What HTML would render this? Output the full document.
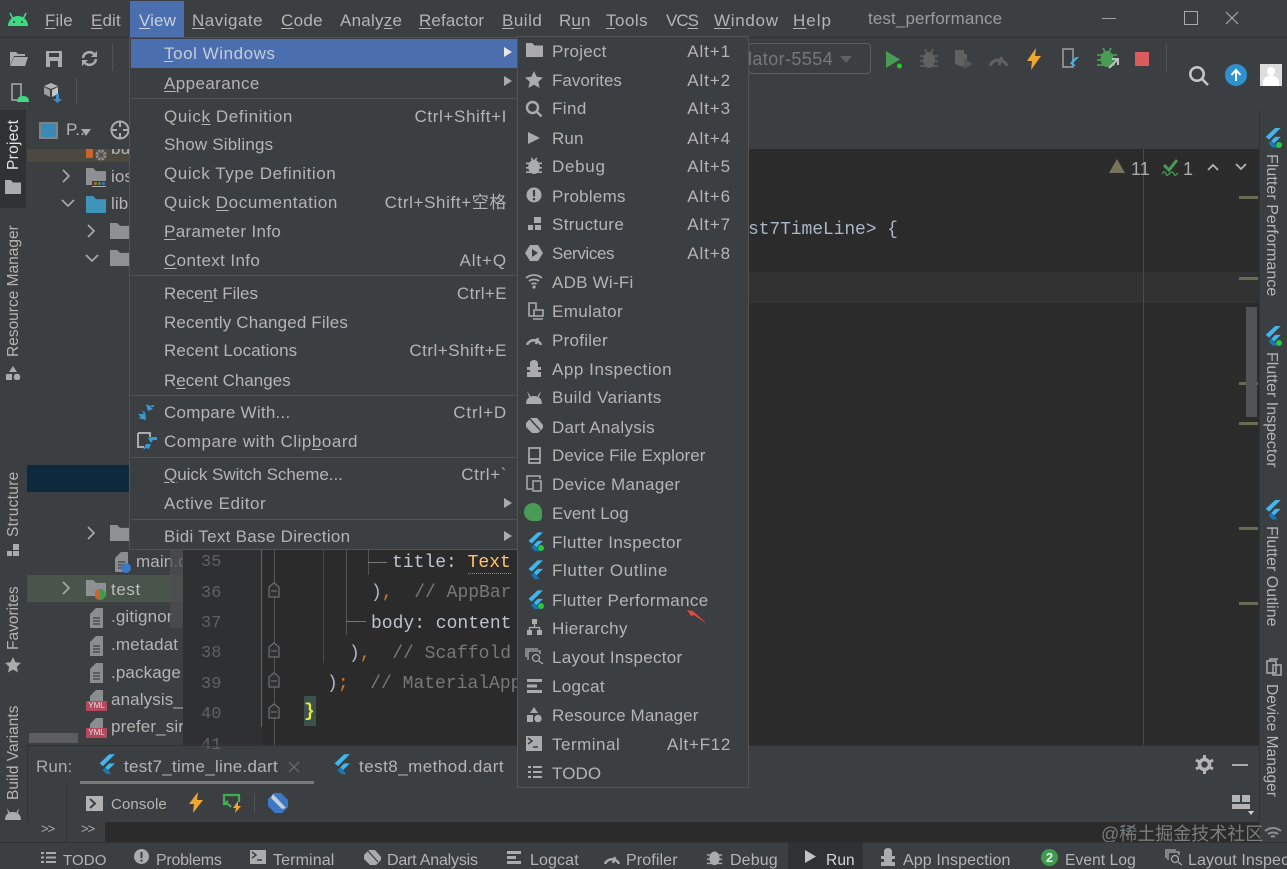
<!DOCTYPE html>
<html><head><meta charset="utf-8"><title>test_performance</title>
<style>
html,body{margin:0;padding:0;background:#3c3f41}
#r{position:relative;width:1287px;height:869px;overflow:hidden;background:#3c3f41;font-family:"Liberation Sans","Noto Sans CJK SC",sans-serif;color:#b4b4b4;font-size:17px}
.a,.t,.s,svg.i{position:absolute}
.t{line-height:24px;white-space:nowrap;letter-spacing:.12px;margin-top:1px}
.k{letter-spacing:.62px}
.b{margin-top:2px}
.m{font-family:"Liberation Mono","DejaVu Sans Mono",monospace;font-size:18px;line-height:24px;position:absolute;white-space:pre;color:#a9b7c6;margin-top:2px}
.n{color:#5f6162;font-family:"Liberation Mono",monospace;font-size:17px;position:absolute;left:201px;line-height:24px;margin-top:2px}
.v{position:absolute;writing-mode:vertical-rl;white-space:nowrap;font-size:15.500px;line-height:20px;color:#b4b4b4}
.r{font-size:16px}
.l{transform:rotate(180deg)}
.sep{position:absolute;height:1px;background:#515355}
.f{fill:#a9abac}
.o{color:#cc7832}
u{text-underline-offset:2px}
</style></head><body><div id="r">
<svg width="0" height="0" style="position:absolute"><defs>
<symbol id="fl" viewBox="2 1 15 18"><path fill="#3fb6ee" d="M11 1h5L5.500 11.500 2.500 9z"/><path fill="#3fb6ee" d="M11 9h5l-6 6-2.500-2.500z"/><path fill="#1a77b5" d="M7.500 12.500 10 15l3 3.500H8.500L5 15z"/></symbol>
<symbol id="fo" viewBox="1 3 14 11" preserveAspectRatio="none"><path d="M1 3h5l2 2h7v9H1z"/></symbol>
<symbol id="doc" viewBox="0 0 18 22"><path fill="#8b8e90" d="M2 7l6-6h7v20H2z"/><path stroke="#3c3f41" stroke-width="1.300" d="M5 11h7M5 14h7M5 17h7"/></symbol>
</defs></svg>

<!-- title bar -->
<div class="a" style="left:0;top:37px;width:1287px;height:1px;background:#2f3133"></div>
<svg class="i" style="left:7px;top:10px" width="22" height="18" viewBox="0 0 22 18"><path fill="#3ddc84" d="M1 16c0-5 4-10 10-10s10 5 10 10z"/><path stroke="#3ddc84" stroke-width="1.500" d="M6 9 3 3M16 9l3-6"/><circle cx="7" cy="12" r="1" fill="#3c3f41"/><circle cx="15" cy="12" r="1" fill="#3c3f41"/></svg>
<div class="t" style="left:45px;top:8px"><u>F</u>ile</div>
<div class="t" style="left:91px;top:8px"><u>E</u>dit</div>
<div class="a" style="left:130px;top:1px;width:54px;height:37px;background:#4b6eaf"></div>
<div class="t" style="left:139px;top:8px;color:#c9d1dc"><u>V</u>iew</div>
<div class="t" style="left:192px;top:8px;letter-spacing:.5px"><u>N</u>avigate</div>
<div class="t" style="left:281px;top:8px;letter-spacing:.3px"><u>C</u>ode</div>
<div class="t" style="left:340px;top:8px;letter-spacing:.25px">Analy<u>z</u>e</div>
<div class="t" style="left:419px;top:8px"><u>R</u>efactor</div>
<div class="t" style="left:502px;top:8px;letter-spacing:.5px"><u>B</u>uild</div>
<div class="t" style="left:559px;top:8px"><span>R<u>u</u>n</span></div>
<div class="t" style="left:606px;top:8px;letter-spacing:.5px"><u>T</u>ools</div>
<div class="t" style="left:666px;top:8px;letter-spacing:-1px">VC<u>S</u></div>
<div class="t" style="left:714px;top:8px;letter-spacing:.7px"><u>W</u>indow</div>
<div class="t" style="left:793px;top:8px;letter-spacing:1px"><u>H</u>elp</div>
<div class="t" style="left:868px;top:6px;color:#9a9c9d">test_performance</div>
<div class="a" style="left:1102px;top:18px;width:14px;height:1px;background:#a0a2a3"></div>
<div class="a" style="left:1184px;top:11px;width:12px;height:12px;border:1px solid #a8aaab"></div>
<svg class="i" style="left:1225px;top:11px" width="14" height="14"><path d="M1 1l12 12M13 1 1 13" stroke="#a8aaab" stroke-width="1.200"/></svg>

<!-- toolbar -->
<svg class="i" style="left:9px;top:50px" width="20" height="17" viewBox="0 0 20 17"><path fill="#a9abac" d="M1 2h6l2 2h7v2H5L1 15z"/><path fill="#a9abac" d="M5 7h14l-3 9H1z"/></svg>
<svg class="i" style="left:45px;top:50px" width="18" height="17" viewBox="0 0 18 17"><path fill="#a9abac" d="M1 1h16v16H1z"/><path fill="#3c3f41" d="M4 3h10v4H4zM5 11h8v6H5z"/></svg>
<svg class="i" style="left:80px;top:50px" width="19" height="17" viewBox="0 0 19 17" fill="none" stroke="#a9abac" stroke-width="2.500"><path d="M3 8a6.500 6.500 0 0 1 11-4M16 9a6.500 6.500 0 0 1-11 4"/><path fill="#a9abac" stroke="none" d="M17 1v6h-6zM2 16v-6h6z"/></svg>
<div class="a" style="left:112px;top:44px;width:1px;height:27px;background:#515355"></div>
<svg class="i" style="left:10px;top:83px" width="20" height="20" viewBox="0 0 20 20"><path fill="none" stroke="#a9abac" stroke-width="1.500" d="M2 1h9v16H2z"/><path fill="#3ddc84" d="M7 19c0-4 2-6 6-6s6 2 6 6z"/></svg>
<svg class="i" style="left:43px;top:82px" width="22" height="22" viewBox="0 0 22 22"><path fill="#b0b2b3" d="M8 1l7 3-7 3-7-3z"/><path fill="#9a9c9d" d="M1 5l6 3v7l-6-3z"/><path fill="#c3c5c6" d="M9 8l6-3v7l-6 3z"/><path fill="#3c8fcf" d="M13 12h3v5h3l-4.500 4L10 17h3z"/></svg>
<div class="a" style="left:76px;top:78px;width:1px;height:26px;background:#515355"></div>

<div class="a" style="left:748px;top:43px;width:121px;height:29px;border:1px solid #5e6060;border-radius:4px"></div>
<div class="t" style="left:748px;top:46px;color:#757778;font-size:18px;letter-spacing:.4px">lator-5554</div>
<div class="a" style="left:840px;top:56px;border:6px solid transparent;border-top:7px solid #5f6162;border-bottom:0"></div>
<svg class="i" style="left:885px;top:50px" width="20" height="20"><path fill="#499c54" d="M1 1l14 8.500L1 18z"/><circle cx="14.500" cy="16" r="2.500" fill="#1fcf1f"/></svg>
<svg class="i" style="left:920px;top:49px" width="18" height="20" viewBox="0 0 18 20"><ellipse cx="9" cy="11" rx="6" ry="8" fill="#5f6162"/><path stroke="#5f6162" stroke-width="1.600" d="M0 7h18M0 12h18M0 17h18M5 0l2 4M13 0l-2 4"/></svg>
<svg class="i" style="left:953px;top:49px" width="21" height="21"><path fill="#5f6162" d="M2 1h9v4h3v5l-4 8-8-3z"/><path fill="#545657" d="M11 9l9 6-9 5z"/></svg>
<svg class="i" style="left:988px;top:52px" width="21" height="14" fill="none" stroke="#5f6162" stroke-width="3"><path d="M2 14a9 9 0 0 1 17 0M11 13l3-8"/></svg>
<svg class="i" style="left:1027px;top:48px" width="15" height="22"><path fill="#f0a732" d="M9 0 0 13h5l-1 9 10-14H8z"/></svg>
<svg class="i" style="left:1061px;top:48px" width="20" height="22"><path fill="none" stroke="#a0a2a3" stroke-width="1.500" d="M2 1h10v18H2z"/><path fill="#3fb6ee" d="M15 9h3l-6 6 1 1 2 2h-3l-3-3z"/></svg>
<svg class="i" style="left:1097px;top:48px" width="24" height="22" viewBox="0 0 24 22"><ellipse cx="10" cy="11" rx="6.500" ry="8" fill="#499c54"/><path stroke="#499c54" stroke-width="1.800" d="M0 7h20M0 12h20M0 17h18M6 0l2 4M14 0l-2 4"/><path stroke="#c0c2c3" stroke-width="2" fill="none" d="M12 20l8-8M15 11h6v6"/></svg>
<div class="a" style="left:1135px;top:52px;width:14px;height:14px;background:#db5c5c"></div>
<div class="a" style="left:1166px;top:44px;width:1px;height:28px;background:#515355"></div>
<svg class="i" style="left:1188px;top:65px" width="22" height="22" fill="none" stroke="#c3c5c6" stroke-width="2.600"><circle cx="9" cy="9" r="6.700"/><path d="m14 14 6 6"/></svg>
<svg class="i" style="left:1224px;top:63px" width="24" height="24"><circle cx="12" cy="12" r="11" fill="#2f92d0"/><path d="M12 18V8M7.500 12 12 7l4.500 5" stroke="#fff" stroke-width="2" fill="none"/></svg>
<div class="a" style="left:1260px;top:64px;width:22px;height:22px;background:#dcdcdc;overflow:hidden"><div class="a" style="left:7px;top:3px;width:8px;height:9px;border-radius:50%;background:#fff"></div><div class="a" style="left:3px;top:12px;width:16px;height:12px;border-radius:6px 6px 0 0;background:#fff"></div></div>
<div class="a" style="left:0;top:110px;width:1287px;height:1px;background:#323232"></div>

<!-- left strip -->
<div class="a" style="left:0;top:110px;width:27px;height:732px;background:#3c3f41;border-right:1px solid #333"></div>
<div class="a" style="left:0;top:110px;width:26px;height:98px;background:#2f3133"></div>
<div class="v l" style="left:4px;top:123px;color:#e4e4e4;height:47px;letter-spacing:.3px">Project</div>
<svg class="i f" style="left:5px;top:180px" width="16" height="14"><use href="#fo"/></svg>
<div class="v l" style="left:4px;top:228px;height:129px">Resource Manager</div>
<svg class="i f" style="left:5px;top:366px" width="16" height="14" viewBox="0 0 16 14"><path d="M8 0l4 6H4zM1 8h6v6H1z"/><circle cx="12" cy="11" r="3.300"/></svg>
<div class="v l" style="left:4px;top:473px;height:64px;letter-spacing:.3px">Structure</div>
<svg class="i f" style="left:6px;top:543px" width="14" height="14"><path d="M7 1h6v6H7zM1 8h5v5H1zM7 8h6v5H7z"/></svg>
<div class="v l" style="left:4px;top:588px;height:62px">Favorites</div>
<svg class="i" style="left:5px;top:657px" width="16" height="16"><path fill="#a9abac" d="m8 0 2.400 5.300 5.600.6-4.200 3.800 1.200 5.700L8 12.500 3 15.400l1.200-5.700L0 5.900l5.600-.6z"/></svg>
<div class="v l" style="left:4px;top:705px;height:95px">Build Variants</div>
<svg class="i f" style="left:5px;top:808px" width="16" height="13"><path d="M0 12c0-5 3-8 8-8s8 3 8 8zM2 0l3 5H3zM14 0l-3 5h2z"/></svg>

<!-- project panel -->
<div class="a" style="left:27px;top:110px;width:156px;height:635px;background:#3c3f41"></div>
<div class="a" style="left:39px;top:122px;width:19px;height:17px;background:#3a8ab5;border:2px solid #7f8385;box-sizing:border-box"></div>
<div class="t" style="left:66px;top:117px">P..</div>
<div class="a" style="left:81px;top:129px;border:5px solid transparent;border-top:7px solid #a9abac;border-bottom:0"></div>
<svg class="i" style="left:110px;top:120px" width="20" height="20" fill="none" stroke="#a9abac" stroke-width="2"><circle cx="10" cy="10" r="8.500"/><path d="M10 1v6M10 13v6M1 10h6M13 10h6"/></svg>
<div class="a" style="left:27px;top:149px;width:156px;height:13px;background:#4c4a40"></div>
<div class="a" style="left:86px;top:149px;width:7px;height:9px;background:#c9652b"></div>
<svg class="i" style="left:95px;top:149px" width="12" height="12"><circle cx="6" cy="6" r="5.500" fill="#8f9193"/><path d="M6 0v12M0 6h12M2 2l8 8M10 2l-8 8" stroke="#4c4a40"/></svg>
<div class="a" style="left:111px;top:149px;width:19px;height:13px;overflow:hidden"><div class="t" style="left:0;top:-12px;margin:0">bu</div></div>
<svg class="i" style="left:61px;top:169px" width="10" height="14" fill="none" stroke="#a9abac" stroke-width="1.600"><path d="m2 1 6 6-6 6"/></svg>
<svg class="i" style="left:86px;top:168px" width="20" height="17" fill="#8d9194"><use href="#fo"/></svg>
<div class="a" style="left:92px;top:181px;width:14px;height:5px;background:#3c3f41;border-bottom:1px solid #aaa"></div>
<div class="a" style="left:94px;top:182px;width:3px;height:3px;background:#c9652b;border-radius:50%"></div><div class="a" style="left:98px;top:182px;width:3px;height:3px;background:#3f9b4e;border-radius:50%"></div><div class="a" style="left:102px;top:182px;width:3px;height:3px;background:#3c78c8;border-radius:50%"></div>
<div class="t" style="left:111px;top:164px">ios</div>
<svg class="i" style="left:61px;top:198px" width="14" height="10" fill="none" stroke="#a9abac" stroke-width="1.600"><path d="m1 2 6 6 6-6"/></svg>
<svg class="i" style="left:86px;top:196px" width="20" height="17" fill="#3e93b8"><use href="#fo"/></svg>
<div class="t" style="left:111px;top:191px">lib</div>
<svg class="i" style="left:86px;top:224px" width="10" height="14" fill="none" stroke="#a9abac" stroke-width="1.600"><path d="m2 1 6 6-6 6"/></svg>
<svg class="i" style="left:110px;top:223px" width="20" height="16" fill="#8d9194"><use href="#fo"/></svg>
<svg class="i" style="left:85px;top:253px" width="14" height="10" fill="none" stroke="#a9abac" stroke-width="1.600"><path d="m1 2 6 6 6-6"/></svg>
<svg class="i" style="left:110px;top:250px" width="20" height="16" fill="#8d9194"><use href="#fo"/></svg>
<div class="a" style="left:27px;top:465px;width:103px;height:27px;background:#0d293e"></div>
<svg class="i" style="left:86px;top:526px" width="10" height="14" fill="none" stroke="#a9abac" stroke-width="1.600"><path d="m2 1 6 6-6 6"/></svg>
<svg class="i" style="left:110px;top:525px" width="20" height="16" fill="#8d9194"><use href="#fo"/></svg>
<svg class="i" style="left:113px;top:551px" width="18" height="22"><use href="#doc"/><circle cx="13" cy="17" r="5" fill="#3c78c8"/></svg>
<div class="t" style="left:136px;top:549px">main.d</div>
<div class="a" style="left:27px;top:575px;width:156px;height:27px;background:#49544a"></div>
<svg class="i" style="left:61px;top:581px" width="10" height="14" fill="none" stroke="#a9abac" stroke-width="1.600"><path d="m2 1 6 6-6 6"/></svg>
<svg class="i" style="left:86px;top:580px" width="20" height="16" fill="#8d9194"><use href="#fo"/></svg>
<svg class="i" style="left:95px;top:589px" width="11" height="11"><path fill="#c9652b" d="M5 0v11A5.500 5.500 0 0 1 5 0z"/><path fill="#3f9b4e" d="M5 0v11A5.500 5.500 0 0 0 5 0z"/></svg>
<div class="t" style="left:111px;top:577px;color:#b9bdb9;letter-spacing:.6px">test</div>
<svg class="i" style="left:88px;top:607px" width="18" height="22"><use href="#doc"/></svg>
<div class="t" style="left:111px;top:604px">.gitignor</div>
<svg class="i" style="left:88px;top:635px" width="18" height="22"><use href="#doc"/></svg>
<div class="t" style="left:111px;top:632px">.metadat</div>
<svg class="i" style="left:88px;top:662px" width="18" height="22"><use href="#doc"/></svg>
<div class="t" style="left:111px;top:660px">.package</div>
<svg class="i" style="left:88px;top:689px" width="18" height="14"><path fill="#8b8e90" d="M2 7l6-6h7v14H2z"/></svg>
<div class="a" style="left:86px;top:701px;width:21px;height:10px;background:#b5485f;color:#e0e0e0;font-size:8px;line-height:10px;text-align:center">YML</div>
<div class="t" style="left:111px;top:687px">analysis_</div>
<svg class="i" style="left:88px;top:717px" width="18" height="14"><path fill="#8b8e90" d="M2 7l6-6h7v14H2z"/></svg>
<div class="a" style="left:86px;top:728px;width:21px;height:10px;background:#b5485f;color:#e0e0e0;font-size:8px;line-height:10px;text-align:center">YML</div>
<div class="t" style="left:111px;top:714px">prefer_sir</div>
<div class="a" style="left:29px;top:733px;width:49px;height:10px;background:#5b5d5e"></div>
<div class="a" style="left:170px;top:510px;width:13px;height:118px;background:#4d4f50;opacity:.7"></div>

<!-- tab strip + editor -->
<div class="a" style="left:183px;top:110px;width:1076px;height:39px;background:#3c3f41"></div>
<div class="a" style="left:183px;top:149px;width:1076px;height:596px;background:#2b2b2b"></div>
<div class="a" style="left:183px;top:149px;width:80px;height:596px;background:#2f3032"></div>
<div class="a" style="left:748px;top:272px;width:511px;height:31px;background:#323232"></div>
<div class="a" style="left:1143px;top:149px;width:1px;height:596px;background:#4a4a4a"></div>
<div class="a" style="left:261px;top:540px;width:1px;height:187px;background:#4f6f6a"></div>
<div class="a" style="left:274px;top:540px;width:1px;height:205px;background:#555"></div>
<div class="m" style="left:748px;top:216px;letter-spacing:-.1px">st7TimeLine&gt; {</div>
<svg class="i" style="left:1109px;top:158px" width="18" height="16"><path fill="#77745c" d="M8 1l8 14H0z"/></svg>
<div class="t" style="left:1131px;top:156px;font-size:18px;color:#a9abac">11</div>
<svg class="i" style="left:1162px;top:159px" width="18" height="18" fill="none" stroke="#499c54"><path stroke-width="3" d="m2 6 5 5 8-10"/><path stroke-width="1.300" d="M0 15c2-3 3-3 4 0s3 0 4-1 3-2 4 1 3 0 4-1"/></svg>
<div class="t" style="left:1183px;top:156px;font-size:18px;color:#a9abac">1</div>
<svg class="i" style="left:1207px;top:162px" width="12" height="10" fill="none" stroke="#b4b4b4" stroke-width="1.800"><path d="m1 8 5-5 5 5"/></svg>
<svg class="i" style="left:1235px;top:162px" width="12" height="10" fill="none" stroke="#b4b4b4" stroke-width="1.800"><path d="m1 2 5 5 5-5"/></svg>
<div class="a" style="left:1239px;top:196px;width:19px;height:3px;background:#6a6a55"></div>
<div class="a" style="left:1239px;top:277px;width:19px;height:3px;background:#6a6a55"></div>
<div class="a" style="left:1239px;top:382px;width:19px;height:3px;background:#6a6a55"></div>
<div class="a" style="left:1239px;top:422px;width:19px;height:3px;background:#6a6a55"></div>
<div class="a" style="left:1239px;top:527px;width:19px;height:3px;background:#6a6a55"></div>
<div class="a" style="left:1239px;top:602px;width:19px;height:3px;background:#6a6a55"></div>
<div class="a" style="left:1246px;top:307px;width:11px;height:110px;background:#515355"></div>

<div class="n" style="top:549px">35</div><div class="n" style="top:580px">36</div><div class="n" style="top:610px">37</div><div class="n" style="top:640px">38</div><div class="n" style="top:671px">39</div><div class="n" style="top:701px">40</div><div class="n" style="top:732px">41</div>
<svg class="i" style="left:267px;top:582px" width="15" height="140" fill="#2f3032" stroke="#6a6c6d" stroke-width="1.300"><path d="M2 5l5-4 5 4v10H2zM4 9h6"/><path transform="translate(0 60)" d="M2 5l5-4 5 4v10H2zM4 9h6"/><path transform="translate(0 90)" d="M2 5l5-4 5 4v10H2zM4 9h6"/><path transform="translate(0 121)" d="M2 5l5-4 5 4v10H2zM4 9h6"/></svg>
<div class="a" style="left:346px;top:548px;width:1px;height:87px;background:#555"></div>
<div class="a" style="left:323px;top:548px;width:1px;height:115px;background:#484848"></div>
<div class="a" style="left:368px;top:548px;width:1px;height:27px;background:#555"></div>
<div class="a" style="left:368px;top:562px;width:19px;height:1px;background:#777"></div>
<div class="a" style="left:346px;top:621px;width:20px;height:1px;background:#777"></div>
<div class="m" style="left:392px;top:549px;color:#c0c6cf">title: <span style="color:#ffc66d;border-bottom:1px dotted #a09040">Text</span></div>
<div class="m" style="left:371px;top:579px">)<span class="o">,</span>  <span style="color:#787878">// AppBar</span></div>
<div class="m" style="left:371px;top:610px;color:#bcc3cc">body: content</div>
<div class="m" style="left:349px;top:640px">)<span class="o">,</span>  <span style="color:#787878">// Scaffold</span></div>
<div class="m" style="left:327px;top:670px">)<span class="o">;</span>  <span style="color:#787878">// MaterialApp</span></div>
<div class="a" style="left:304px;top:696px;width:12px;height:30px;background:#3b514d"></div>
<div class="m" style="left:304px;top:698px;color:#e8e845;font-weight:700">}</div>

<!-- right strip -->
<div class="a" style="left:1259px;top:110px;width:28px;height:732px;background:#3c3f41;border-left:1px solid #333;box-sizing:border-box"></div>
<svg class="i" style="left:1265px;top:128px" width="17" height="20"><use href="#fl"/><circle cx="14" cy="17" r="3" fill="#28c840"/></svg>
<div class="v r" style="left:1261px;top:154px;letter-spacing:.05px">Flutter Performance</div>
<svg class="i" style="left:1265px;top:326px" width="17" height="20"><use href="#fl"/><circle cx="14" cy="17" r="3" fill="#28c840"/></svg>
<div class="v r" style="left:1261px;top:352px">Flutter Inspector</div>
<svg class="i" style="left:1265px;top:500px" width="17" height="20"><use href="#fl"/></svg>
<div class="v r" style="left:1261px;top:526px">Flutter Outline</div>
<svg class="i" style="left:1265px;top:658px" width="17" height="18" fill="none" stroke="#a9abac" stroke-width="1.500"><path d="M5 3V1h8M2 3h9v12H2zM8 7h8v10H8z"/></svg>
<div class="v" style="left:1261px;top:684px">Device Manager</div>

<!-- run tool -->
<div class="a" style="left:27px;top:745px;width:1232px;height:1px;background:#323232"></div>
<div class="t" style="left:36px;top:754px;color:#a9abac">Run:</div>
<svg class="i" style="left:99px;top:754px" width="17" height="21"><use href="#fl"/></svg>
<div class="t" style="left:124px;top:754px;letter-spacing:.28px">test7_time_line.dart</div>
<svg class="i" style="left:288px;top:761px" width="12" height="12" stroke="#6a6c6d" stroke-width="1.200"><path d="M1 1l10 10M11 1 1 11"/></svg>
<div class="a" style="left:80px;top:781px;width:234px;height:3px;background:#767879"></div>
<svg class="i" style="left:334px;top:754px" width="17" height="21"><use href="#fl"/></svg>
<div class="t" style="left:359px;top:754px;letter-spacing:.47px">test8_method.dart</div>
<svg class="i" style="left:1195px;top:755px" width="19" height="19" viewBox="0 0 19 19" fill="none"><circle cx="9.500" cy="9.500" r="5" stroke="#b4b4b4" stroke-width="3.500"/><path stroke="#b4b4b4" stroke-width="3" d="M9.500 0v4M9.500 15v4M1 5l3.500 2M14.500 12l3.500 2M1 14l3.500-2M14.500 7 18 5"/></svg>
<div class="a" style="left:1232px;top:764px;width:16px;height:2px;background:#a9abac"></div>
<div class="a" style="left:66px;top:785px;width:1px;height:37px;background:#333"></div>
<div class="a" style="left:1232px;top:795px;width:8px;height:7px;background:#b4b4b4"></div><div class="a" style="left:1242px;top:795px;width:8px;height:7px;background:#b4b4b4"></div><div class="a" style="left:1232px;top:804px;width:18px;height:5px;background:#b4b4b4"></div>
<div class="a" style="left:1248px;top:811px;border:3px solid transparent;border-top:4px solid #d0d0d0;border-bottom:0"></div>
<svg class="i" style="left:86px;top:796px" width="17" height="15"><path fill="#b0b2b3" d="M0 0h17v15H0z"/><path fill="none" stroke="#3c3f41" stroke-width="2" d="m4 3 5 4.500L4 12"/></svg>
<div class="t" style="left:111px;top:792px;font-size:15px">Console</div>
<svg class="i" style="left:189px;top:792px" width="14" height="21"><path fill="#f0a732" d="M9 0 0 12h5L4 21l10-13H8z"/></svg>
<svg class="i" style="left:222px;top:793px" width="22" height="20" fill="none" stroke="#3fae4f" stroke-width="2.200"><path d="M6 11H2V2h15v7M2 11l4-3M6 11l3 3"/><path fill="#f0a732" stroke="none" d="M16 8l-5 7h3l-1 5 6-7h-3z"/></svg>
<div class="a" style="left:254px;top:793px;width:1px;height:20px;background:#515355"></div>
<svg class="i" style="left:268px;top:793px" width="20" height="20"><path fill="#3c78c8" d="M6 0h7l7 7v7l-6 6H7l-7-7V6z"/><path fill="#c5cdd8" d="M5 1l13 14-4 1L3 5z"/></svg>

<div class="a" style="left:27px;top:822px;width:1232px;height:20px;background:#2b2b2b"></div>
<div class="a" style="left:27px;top:822px;width:78px;height:20px;background:#3c3f41"></div>
<div class="a" style="left:66px;top:822px;width:1px;height:20px;background:#333"></div>
<div class="t" style="left:41px;top:816px;font-size:13px;color:#a9abac;letter-spacing:-1px">&gt;&gt;</div>
<div class="t" style="left:81px;top:816px;font-size:13px;color:#a9abac;letter-spacing:-1px">&gt;&gt;</div>
<div class="t" style="left:1101px;top:821px;font-size:18px;color:#7b7d7e;letter-spacing:0">@稀土掘金技术社区</div>
<svg class="i" style="left:1263px;top:826px" width="20" height="14" fill="none" stroke="#8b8d8e" stroke-width="2"><path d="M2 5c5-4 11-4 16 0M5 8c3-2 7-2 10 0M8 11c1-1 3-1 4 0"/></svg>

<!-- status tool bar -->
<div class="a" style="left:0;top:842px;width:1287px;height:27px;background:#3c3f41;border-top:1px solid #333;box-sizing:border-box"></div>
<div class="a" style="left:788px;top:842px;width:75px;height:27px;background:#2f3133"></div>
<svg class="i f" style="left:41px;top:851px" width="15" height="13"><path d="M0 1h3v2H0zM5 1h10v2H5zM0 5.500h3v2H0zM5 5.500h10v2H5zM0 10h3v2H0zM5 10h10v2H5z"/></svg>
<div class="t b" style="left:63px;top:847px;font-size:15px">TODO</div>
<svg class="i" style="left:134px;top:849px" width="15" height="15"><circle cx="7.500" cy="7.500" r="7.500" fill="#a9abac"/><path d="M7.500 3v6M7.500 10.500v2" stroke="#3c3f41" stroke-width="2"/></svg>
<div class="t b" style="left:156px;top:847px;font-size:16px;letter-spacing:-.25px">Problems</div>
<svg class="i" style="left:250px;top:850px" width="16" height="14"><path fill="#a9abac" d="M0 0h16v14H0z"/><path fill="none" stroke="#3c3f41" stroke-width="1.500" d="m2 2 4 3-4 3M7 10h5"/></svg>
<div class="t b" style="left:273px;top:847px;font-size:16px">Terminal</div>
<svg class="i" style="left:364px;top:850px" width="17" height="15"><path fill="#a9abac" d="M5 0h6l6 7v3l-5 5H6L0 9V5z"/><path stroke="#3c3f41" stroke-width="1.300" d="M4 1l10 11"/></svg>
<div class="t b" style="left:387px;top:847px;font-size:16px;letter-spacing:-.2px">Dart Analysis</div>
<svg class="i f" style="left:507px;top:851px" width="15" height="13"><path d="M0 0h14v3H0zM0 5h9v3H0zM0 10h14v3H0z"/></svg>
<div class="t b" style="left:530px;top:847px;font-size:16px">Logcat</div>
<svg class="i" style="left:603px;top:852px" width="18" height="12" fill="none" stroke="#a9abac" stroke-width="2.500"><path d="M2 12a7.500 7.500 0 0 1 14 0M10 11l2-6"/></svg>
<div class="t b" style="left:626px;top:847px;font-size:16px">Profiler</div>
<svg class="i" style="left:706px;top:849px" width="17" height="17" viewBox="0 0 18 20"><ellipse cx="9" cy="11" rx="6" ry="8" fill="#a9abac"/><path stroke="#a9abac" stroke-width="1.600" d="M0 7h18M0 12h18M0 17h18"/></svg>
<div class="t b" style="left:730px;top:847px;font-size:16px">Debug</div>
<svg class="i" style="left:804px;top:849px" width="12" height="15"><path fill="#c0c2c3" d="M1 1l11 6.500L1 14z"/></svg>
<div class="t b" style="left:826px;top:847px;font-size:15.500px;color:#d5d5d5">Run</div>
<svg class="i" style="left:880px;top:848px" width="16" height="19"><path fill="#a9abac" d="M4 3a4 3 0 0 1 8 0v5h3v3h-3v3h3v4H1v-4h3v-3H1V8h3z"/></svg>
<div class="t b" style="left:903px;top:847px;font-size:16px">App Inspection</div>
<div class="a" style="left:1041px;top:849px;width:17px;height:17px;border-radius:50%;background:#3f9b4e;color:#e8e8e8;font-size:13px;line-height:17px;text-align:center;font-weight:700">2</div>
<div class="t b" style="left:1065px;top:847px;font-size:15.500px">Event Log</div>
<svg class="i" style="left:1165px;top:849px" width="18" height="17" fill="none" stroke="#a9abac" stroke-width="1.300"><path d="M1 9V1h10M3 11V3h11v3"/><circle cx="10" cy="10" r="3.500"/><path d="m13 13 4 3"/></svg>
<div class="t b" style="left:1188px;top:847px;font-size:16px">Layout Inspect</div>

<!-- main menu -->
<div class="a" style="left:130px;top:38px;width:388px;height:511px;background:#3c3f41;box-shadow:0 0 0 1px #515355"></div>
<div class="a" style="left:131px;top:39px;width:387px;height:29px;background:#4b6eaf"></div>
<div class="t" style="left:164px;top:41px;color:#c5cdd9;letter-spacing:.55px"><u>T</u>ool Windows</div>
<div class="a" style="left:504px;top:47px;border-left:8px solid #e8e8e8;border-top:5px solid transparent;border-bottom:5px solid transparent"></div>
<div class="t" style="left:164px;top:71px;letter-spacing:.4px"><u>A</u>ppearance</div>
<div class="a" style="left:504px;top:76px;border-left:8px solid #a9abac;border-top:5px solid transparent;border-bottom:5px solid transparent"></div>
<div class="sep" style="left:131px;top:98px;width:387px"></div>
<div class="t" style="left:164px;top:104px;letter-spacing:.62px">Quic<u>k</u> Definition</div>
<div class="t k" style="right:780px;top:104px">Ctrl+Shift+I</div>
<div class="t" style="left:164px;top:132px;letter-spacing:.2px">Show Siblings</div>
<div class="t" style="left:164px;top:161px;letter-spacing:.57px">Quick Type Definition</div>
<div class="t" style="left:164px;top:190px;letter-spacing:.6px">Quick <u>D</u>ocumentation</div>
<div class="t k" style="right:780px;top:190px">Ctrl+Shift+空格</div>
<div class="t" style="left:164px;top:219px;letter-spacing:.34px"><u>P</u>arameter Info</div>
<div class="t" style="left:164px;top:248px;letter-spacing:.38px"><u>C</u>ontext Info</div>
<div class="t k" style="right:780px;top:248px;letter-spacing:.9px">Alt+Q</div>
<div class="sep" style="left:131px;top:275px;width:387px"></div>
<div class="t" style="left:164px;top:281px;letter-spacing:-.05px">Rece<u>n</u>t Files</div>
<div class="t k" style="right:780px;top:281px;letter-spacing:.4px">Ctrl+E</div>
<div class="t" style="left:164px;top:310px;letter-spacing:.16px">Recently Changed Files</div>
<div class="t" style="left:164px;top:338px">Recent Locations</div>
<div class="t k" style="right:780px;top:338px;letter-spacing:.5px">Ctrl+Shift+E</div>
<div class="t" style="left:164px;top:368px;letter-spacing:0">R<u>e</u>cent Changes</div>
<div class="sep" style="left:131px;top:395px;width:387px"></div>
<svg class="i" style="left:136px;top:402px" width="20" height="20"><path fill="#3c9ad0" d="M2 12h6l-2-3 3 1 1 8-8-2 3-1zM18 3v2h-4l3 2-5 2-2-7 2 1 2 1z"/></svg>
<div class="t" style="left:164px;top:400px;letter-spacing:.24px">Compare With...</div>
<div class="t k" style="right:780px;top:400px;letter-spacing:.85px">Ctrl+D</div>
<svg class="i" style="left:136px;top:430px" width="22" height="21"><path fill="none" stroke="#a9abac" stroke-width="2" d="M2 3h12v4M2 3v14h6"/><path fill="#3c9ad0" d="M10 14h5l-2 5-3-1-3 2zM21 7v3h-4l-2 3-3-5 4-1z"/></svg>
<div class="t" style="left:164px;top:429px;letter-spacing:.53px">Compare with Clip<u>b</u>oard</div>
<div class="sep" style="left:131px;top:457px;width:387px"></div>
<div class="t" style="left:164px;top:462px;letter-spacing:-.03px"><u>Q</u>uick Switch Scheme...</div>
<div class="t k" style="right:780px;top:462px">Ctrl+`</div>
<div class="t" style="left:164px;top:491px;letter-spacing:.52px">Active Editor</div>
<div class="a" style="left:504px;top:498px;border-left:8px solid #a9abac;border-top:5px solid transparent;border-bottom:5px solid transparent"></div>
<div class="sep" style="left:131px;top:519px;width:387px"></div>
<div class="t" style="left:164px;top:524px;letter-spacing:.3px">Bidi Text Base Direction</div>
<div class="a" style="left:504px;top:531px;border-left:8px solid #a9abac;border-top:5px solid transparent;border-bottom:5px solid transparent"></div>

<!-- submenu -->
<div class="a" style="left:518px;top:37px;width:230px;height:750px;background:#3c3f41;box-shadow:0 0 0 1px #515355"></div>
<div class="t" style="left:552px;top:39px;letter-spacing:.25px">Project</div><div class="t k" style="right:556px;top:39px;letter-spacing:.9px">Alt+1</div>
<div class="t" style="left:552px;top:68px;letter-spacing:0">Favorites</div><div class="t k" style="right:556px;top:68px;letter-spacing:.9px">Alt+2</div>
<div class="t" style="left:552px;top:96px;letter-spacing:.4px">Find</div><div class="t k" style="right:556px;top:96px;letter-spacing:.9px">Alt+3</div>
<div class="t" style="left:552px;top:126px">Run</div><div class="t k" style="right:556px;top:126px;letter-spacing:.9px">Alt+4</div>
<div class="t" style="left:552px;top:154px;letter-spacing:.7px">Debug</div><div class="t k" style="right:556px;top:154px;letter-spacing:.9px">Alt+5</div>
<div class="t" style="left:552px;top:184px;letter-spacing:.24px">Problems</div><div class="t k" style="right:556px;top:184px;letter-spacing:.9px">Alt+6</div>
<div class="t" style="left:552px;top:212px;letter-spacing:.35px">Structure</div><div class="t k" style="right:556px;top:212px;letter-spacing:.9px">Alt+7</div>
<div class="t" style="left:552px;top:241px;letter-spacing:-.38px">Services</div><div class="t k" style="right:556px;top:241px;letter-spacing:.9px">Alt+8</div>
<div class="t" style="left:552px;top:270px;letter-spacing:.24px">ADB Wi-Fi</div>
<div class="t" style="left:552px;top:299px;letter-spacing:.37px">Emulator</div>
<div class="t" style="left:552px;top:328px;letter-spacing:.26px">Profiler</div>
<div class="t" style="left:552px;top:357px;letter-spacing:.55px">App Inspection</div>
<div class="t" style="left:552px;top:385px;letter-spacing:.43px">Build Variants</div>
<div class="t" style="left:552px;top:415px;letter-spacing:.28px">Dart Analysis</div>
<div class="t" style="left:552px;top:443px;letter-spacing:.07px">Device File Explorer</div>
<div class="t" style="left:552px;top:472px;letter-spacing:.33px">Device Manager</div>
<div class="t" style="left:552px;top:501px;letter-spacing:0">Event Log</div>
<div class="t" style="left:552px;top:530px;letter-spacing:.42px">Flutter Inspector</div>
<div class="t" style="left:552px;top:558px;letter-spacing:.62px">Flutter Outline</div>
<div class="t" style="left:552px;top:588px;letter-spacing:.33px">Flutter Performance</div>
<div class="t" style="left:552px;top:616px;letter-spacing:.34px">Hierarchy</div>
<div class="t" style="left:552px;top:645px;letter-spacing:.3px">Layout Inspector</div>
<div class="t" style="left:552px;top:674px;letter-spacing:.3px">Logcat</div>
<div class="t" style="left:552px;top:703px">Resource Manager</div>
<div class="t" style="left:552px;top:732px;letter-spacing:.5px">Terminal</div><div class="t k" style="right:556px;top:732px;letter-spacing:.7px">Alt+F12</div>
<div class="t" style="left:552px;top:761px">TODO</div>

<svg class="i f" style="left:526px;top:43px" width="17" height="14"><use href="#fo"/></svg>
<svg class="i" style="left:525px;top:71px" width="18" height="17"><path fill="#a9abac" d="m9 0 2.700 5.800 6.300.7-4.700 4.300L14.600 17 9 13.800 3.400 17l1.300-6.200L0 6.500l6.300-.7z"/></svg>
<svg class="i" style="left:525px;top:100px" width="18" height="18" fill="none" stroke="#a9abac" stroke-width="2.400"><circle cx="7.500" cy="7.500" r="5.500"/><path d="m11.500 11.500 5 5"/></svg>
<svg class="i f" style="left:527px;top:130px" width="14" height="16"><path d="M1 2l12 6-12 6z"/></svg>
<svg class="i" style="left:526px;top:157px" width="16" height="18" viewBox="0 0 18 20"><ellipse cx="9" cy="11" rx="6.500" ry="8" fill="#a9abac"/><path stroke="#a9abac" stroke-width="1.800" d="M0 7h18M0 12h18M0 17h18M6 1l2 3M12 1l-2 3"/></svg>
<svg class="i" style="left:526px;top:187px" width="16" height="16"><circle cx="8" cy="8" r="7.500" fill="#a9abac"/><path d="M8 3v6.500M8 11v2.300" stroke="#3c3f41" stroke-width="2.200"/></svg>
<svg class="i f" style="left:528px;top:217px" width="14" height="14"><path d="M6 0h7v6H6zM0 8h5v5H0zM7 8h6v5H7z"/></svg>
<svg class="i" style="left:525px;top:244px" width="18" height="18"><path fill="#a9abac" d="M5 1h8l5 8-5 8H5L0 9z"/><path fill="#3c3f41" d="m7 5 6 4-6 4z"/></svg>
<svg class="i" style="left:525px;top:273px" width="18" height="16" fill="none" stroke="#a9abac" stroke-width="1.700"><path d="M1 5c5-4 11-4 16 0M4 8c3-2 7-2 10 0M6.500 11c2-1 3-1 5 0"/><circle cx="9" cy="14" r=".8"/></svg>
<svg class="i" style="left:528px;top:302px" width="16" height="18" fill="none" stroke="#a9abac" stroke-width="1.600"><path d="M7 14H1V1h7v6M6 8h9v6H6zM5 17h10"/></svg>
<svg class="i" style="left:525px;top:333px" width="18" height="12" fill="none" stroke="#a9abac" stroke-width="2.600"><path d="M2 12a7.500 7.500 0 0 1 14 0M11 11l2-6"/></svg>
<svg class="i" style="left:526px;top:360px" width="16" height="18"><path fill="#a9abac" d="M4 3a4 3 0 0 1 8 0v4h3v3h-3v2h3v5H1v-5h3v-2H1V7h3z"/></svg>
<svg class="i f" style="left:526px;top:391px" width="16" height="13"><path d="M0 13c0-5 3-8 8-8s8 3 8 8zM1 0l4 6H3zM15 0l-4 6h2z"/></svg>
<svg class="i" style="left:526px;top:418px" width="17" height="16"><path fill="#a9abac" d="M5 0h6l6 7v3l-5 5H6L0 9V5z"/><path stroke="#3c3f41" stroke-width="1.400" d="m4 1 10 11"/></svg>
<svg class="i" style="left:528px;top:447px" width="13" height="17" fill="none" stroke="#a9abac" stroke-width="1.700"><path d="M1 1h11v15H1zM1 12h11"/></svg>
<svg class="i" style="left:526px;top:475px" width="16" height="17" fill="none" stroke="#a9abac" stroke-width="1.500"><path d="M6 14H1V1h13v3M7 6h8v10H7z"/></svg>
<div class="a" style="left:524px;top:503px;width:18px;height:18px;background:#499c54;border-radius:50% 50% 4px 50%"></div>
<svg class="i" style="left:528px;top:532px" width="16" height="20"><use href="#fl"/></svg><div class="a" style="left:538px;top:545px;width:6px;height:6px;border-radius:50%;background:#28c840"></div>
<svg class="i" style="left:528px;top:560px" width="16" height="20"><use href="#fl"/></svg>
<svg class="i" style="left:528px;top:590px" width="16" height="20"><use href="#fl"/></svg><div class="a" style="left:538px;top:603px;width:6px;height:6px;border-radius:50%;background:#28c840"></div>
<svg class="i f" style="left:527px;top:619px" width="15" height="17"><path d="M5 0h5v5H5zM0 11h5v5H0zM10 11h5v5h-5z"/><path stroke="#a9abac" fill="none" stroke-width="1.300" d="M7.500 5v4M2.500 11V8.500h10V11"/></svg>
<svg class="i" style="left:525px;top:648px" width="19" height="18" fill="none" stroke="#a9abac" stroke-width="1.300"><path d="M1 9V1h12M3 12V3h12v3"/><circle cx="11" cy="10" r="3.500"/><path d="m14 13 4 3"/></svg>
<svg class="i f" style="left:527px;top:679px" width="15" height="14"><path d="M0 0h15v3H0zM0 5.500h10v3H0zM0 11h15v3H0z"/></svg>
<svg class="i" style="left:526px;top:707px" width="16" height="16"><path fill="#a9abac" d="M8 0l4 6H4zM1 8h6v7H1z"/><circle cx="12" cy="11.500" r="3.700" fill="#a9abac"/></svg>
<svg class="i" style="left:526px;top:736px" width="16" height="15"><path fill="#a9abac" d="M0 0h16v15H0z"/><path fill="none" stroke="#3c3f41" stroke-width="1.500" d="m2 2 4 3-4 3M7 11h5"/></svg>
<svg class="i f" style="left:528px;top:766px" width="14" height="12"><path d="M0 0h3v2H0zM5 0h9v2H5zM0 5h3v2H0zM5 5h9v2H5zM0 10h3v2H0zM5 10h9v2H5z"/></svg>
<svg class="i" style="left:686px;top:609px" width="22" height="16"><path fill="#e14a3f" d="M1 1l6 1 14 13-13-9-3 1z"/></svg>
</div></body></html>
